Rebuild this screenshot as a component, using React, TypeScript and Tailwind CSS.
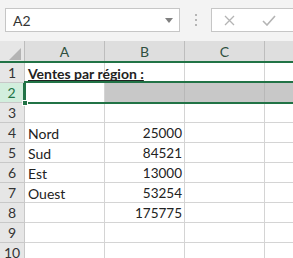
import React from "react";

const cols = ["A", "B", "C", ""];

const rows: { n: number; a?: string; b?: string; bold?: boolean }[] = [
  { n: 1, a: "Ventes par région :", bold: true },
  { n: 2 },
  { n: 3 },
  { n: 4, a: "Nord", b: "25000" },
  { n: 5, a: "Sud", b: "84521" },
  { n: 6, a: "Est", b: "13000" },
  { n: 7, a: "Ouest", b: "53254" },
  { n: 8, b: "175775" },
  { n: 9 },
  { n: 10 },
];

const App = () => {
  return (
    <div className="w-[293px] h-[258px] overflow-hidden bg-white text-[#222] font-['Lato',sans-serif] select-none">
      {/* formula bar */}
      <div className="h-[41px] bg-[#f3f3f3] flex items-start pt-[8px] pl-[5px]">
        <div className="w-[175px] h-[24px] bg-white border border-[#c6c6c6] flex items-center pl-[7px] pr-[6px]">
          <span className="text-[14px] text-[#333] flex-1">A2</span>
          <svg width="8" height="5" viewBox="0 0 8 5">
            <path d="M0 0 L8 0 L4 5 Z" fill="#808080" />
          </svg>
        </div>
        <div className="w-[31px] h-[24px] flex flex-col items-center justify-center gap-[3px]">
          <div className="w-[2px] h-[2px] bg-[#b5b5b5]" />
          <div className="w-[2px] h-[2px] bg-[#b5b5b5]" />
          <div className="w-[2px] h-[2px] bg-[#b5b5b5]" />
        </div>
        <div className="flex-1 h-[24px] bg-white border border-r-0 border-[#c6c6c6] flex items-center pl-[12px] gap-[27px]">
          <svg width="11" height="11" viewBox="0 0 11 11">
            <path d="M1 1 L10 10 M10 1 L1 10" stroke="#b4b4b4" strokeWidth="1.3" fill="none" />
          </svg>
          <svg width="14" height="11" viewBox="0 0 14 11">
            <path d="M1 6 L5 10 L13 1" stroke="#b4b4b4" strokeWidth="1.6" fill="none" />
          </svg>
        </div>
      </div>

      {/* column headers */}
      <div className="flex h-[22px] bg-[#dedede] border-b-2 border-[#217346]">
        <div className="w-[25px] shrink-0 border-r border-[#bdbdbd] bg-[#e6e6e6] flex items-end justify-end pr-[3px] pb-[1px]">
          <svg width="12" height="12" viewBox="0 0 12 12">
            <path d="M12 0 L12 12 L0 12 Z" fill="#b4b4b4" />
          </svg>
        </div>
        {cols.map((c, i) => (
          <div
            key={i}
            className="w-[80px] shrink-0 border-r border-[#bdbdbd] flex items-center justify-center text-[14px] text-[#2f4f3f]"
          >
            {c}
          </div>
        ))}
      </div>

      {/* rows */}
      {rows.map((r) => {
        const sel = r.n === 2;
        return (
          <div key={r.n} className="relative flex h-[20px]">
            <div
              className={
                sel
                  ? "w-[25px] shrink-0 border-r-2 border-b border-r-[#217346] border-b-[#c8c8c8] bg-[#d2eedd] text-[#217346] flex items-center justify-center text-[14px]"
                  : "w-[25px] shrink-0 border-r border-b border-[#c8c8c8] bg-[#e6e6e6] text-[#333] flex items-center justify-center text-[14px]"
              }
            >
              {r.n}
            </div>
            <div className="w-[80px] shrink-0 border-r border-b border-[#d4d4d4] bg-white flex items-center pl-[3px] pt-[1px] text-[14px] whitespace-nowrap overflow-visible relative z-10">
              {r.a && (
                <span
                  className={
                    r.bold
                      ? "font-bold underline decoration-[1.5px] underline-offset-[1px] [text-decoration-skip-ink:none]"
                      : ""
                  }
                >
                  {r.a}
                </span>
              )}
            </div>
            <div
              className={
                "w-[80px] shrink-0 border-r border-b flex items-center justify-end pr-[2px] pt-[1px] text-[13.5px] " +
                (sel ? "bg-[#c8c8c8] border-[#b8b8b8]" : "bg-white border-[#d4d4d4]")
              }
            >
              {r.b}
            </div>
            <div
              className={
                "w-[80px] shrink-0 border-r border-b " +
                (sel ? "bg-[#c8c8c8] border-[#b8b8b8]" : "bg-white border-[#d4d4d4]")
              }
            />
            <div
              className={
                "w-[80px] shrink-0 border-b " + (sel ? "bg-[#c8c8c8] border-[#b8b8b8]" : "bg-white border-[#d4d4d4]")
              }
            />
            {sel && (
              <div className="absolute left-[24px] right-0 top-[-2px] bottom-[-1px] border-t-2 border-b-2 border-l-2 border-[#217346] z-20 pointer-events-none">
                <div className="absolute left-[-4px] bottom-[-4px] w-[6px] h-[6px] bg-[#217346] border border-white" />
              </div>
            )}
          </div>
        );
      })}
    </div>
  );
};

export default App;
